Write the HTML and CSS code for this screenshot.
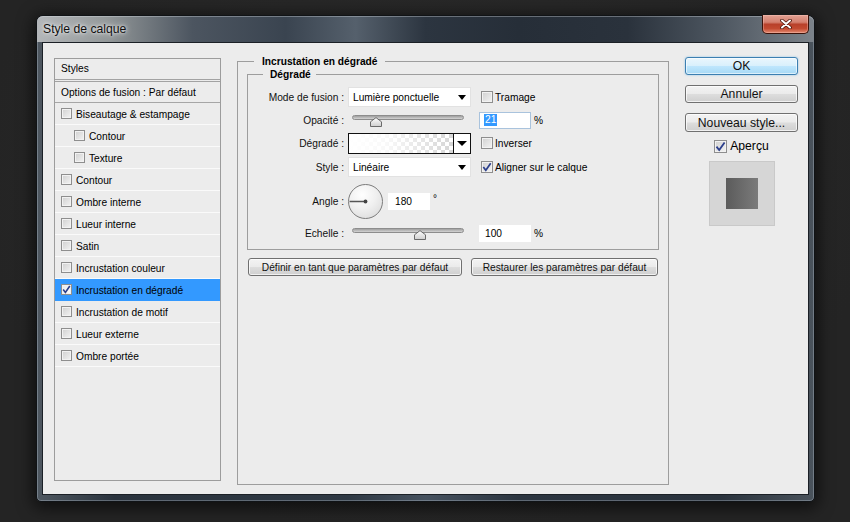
FILE: index.html
```html
<!DOCTYPE html>
<html lang="fr">
<head>
<meta charset="utf-8">
<title>Style de calque</title>
<link rel="stylesheet" href="styles.css">
</head>
<body>
<div class="desktop">
  <div class="window">
    <div class="titlebar">
      <span class="title">Style de calque</span>
      <div class="close">
        <svg width="12" height="10" viewBox="0 0 12 10"><path d="M2 1.5 L10 8.5 M10 1.5 L2 8.5" stroke="#4a1408" stroke-width="3.6" stroke-linecap="round"/><path d="M2 1.5 L10 8.5 M10 1.5 L2 8.5" stroke="#ffffff" stroke-width="2" stroke-linecap="round"/></svg>
      </div>
    </div>
    <div class="client">
      <div class="styles-panel">
        <div class="sp-head">Styles</div>
        <div class="sp-opts">Options de fusion : Par défaut</div>
        <div class="sp-row"><span class="cb"></span>Biseautage &amp; estampage</div>
        <div class="sp-row sub"><span class="cb"></span>Contour</div>
        <div class="sp-row sub"><span class="cb"></span>Texture</div>
        <div class="sp-row"><span class="cb"></span>Contour</div>
        <div class="sp-row"><span class="cb"></span>Ombre interne</div>
        <div class="sp-row"><span class="cb"></span>Lueur interne</div>
        <div class="sp-row"><span class="cb"></span>Satin</div>
        <div class="sp-row"><span class="cb"></span>Incrustation couleur</div>
        <div class="sp-row selected"><span class="cb checked"><svg width="9" height="9" viewBox="0 0 9 9"><path d="M1.2 4.6 L3.4 7.4 L7.8 1" fill="none" stroke="#2c3f8c" stroke-width="1.6"/></svg></span>Incrustation en dégradé</div>
        <div class="sp-row"><span class="cb"></span>Incrustation de motif</div>
        <div class="sp-row"><span class="cb"></span>Lueur externe</div>
        <div class="sp-row"><span class="cb"></span>Ombre portée</div>
      </div>

      <fieldset class="group">
        <legend>Incrustation en dégradé</legend>
        <fieldset class="subgroup">
          <legend>Dégradé</legend>
          <div class="form-grid">
            <div class="lbl">Mode de fusion :</div>
            <div class="select"><span>Lumière ponctuelle</span><svg class="arrow" width="8" height="5" viewBox="0 0 8 5"><path d="M0 0 H8 L4 5 Z" fill="#000"/></svg></div>
            <div class="c3"><span class="chk"><span class="cb"></span>Tramage</span></div>

            <div class="lbl">Opacité :</div>
            <div class="slider"><div class="track"></div><svg class="thumb" style="left:calc(21% - 6px)" width="12" height="10" viewBox="0 0 12 10"><defs><linearGradient id="tg1" x1="0" y1="0" x2="0" y2="1"><stop offset="0" stop-color="#ffffff"/><stop offset="1" stop-color="#cfcfcf"/></linearGradient></defs><path d="M0.5 9.5 V4.8 L6 0.6 L11.5 4.8 V9.5 Z" fill="url(#tg1)" stroke="#6a6a6a"/></svg></div>
            <div class="c3"><div class="field focus"><span class="sel">21</span></div><span class="unit">%</span></div>

            <div class="lbl">Dégradé :</div>
            <div class="gradbox"><div class="gradfill"></div><div class="gradarrow"><svg width="10" height="5" viewBox="0 0 10 5"><path d="M0 0 H10 L5 5 Z" fill="#000"/></svg></div></div>
            <div class="c3"><span class="chk"><span class="cb"></span>Inverser</span></div>

            <div class="lbl">Style :</div>
            <div class="select"><span>Linéaire</span><svg class="arrow" width="8" height="5" viewBox="0 0 8 5"><path d="M0 0 H8 L4 5 Z" fill="#000"/></svg></div>
            <div class="c3"><span class="chk"><span class="cb checked"><svg width="10" height="10" viewBox="0 0 10 10"><path d="M1.3 5 L3.8 8.2 L8.7 1.2" fill="none" stroke="#2c3f8c" stroke-width="1.7"/></svg></span>Aligner sur le calque</span></div>

            <div class="lbl">Angle :</div>
            <div class="angle-ctl">
              <div class="dial"><svg width="35" height="35" viewBox="0 0 35 35"><path d="M1.5 17.5 H17.5" stroke="#555" stroke-width="1.4"/><circle cx="17.5" cy="17.5" r="1.9" fill="#444"/></svg></div>
              <div class="field angle-field">180</div>
              <span class="deg">°</span>
            </div>
            <div class="c3"></div>

            <div class="lbl">Echelle :</div>
            <div class="slider"><div class="track"></div><svg class="thumb" style="left:calc(61% - 6px)" width="12" height="10" viewBox="0 0 12 10"><defs><linearGradient id="tg2" x1="0" y1="0" x2="0" y2="1"><stop offset="0" stop-color="#ffffff"/><stop offset="1" stop-color="#cfcfcf"/></linearGradient></defs><path d="M0.5 9.5 V4.8 L6 0.6 L11.5 4.8 V9.5 Z" fill="url(#tg2)" stroke="#6a6a6a"/></svg></div>
            <div class="c3"><div class="field">100</div><span class="unit">%</span></div>
          </div>
        </fieldset>
        <div class="btn-row">
          <div class="btn btn-def">Définir en tant que paramètres par défaut</div>
          <div class="btn btn-rest">Restaurer les paramètres par défaut</div>
        </div>
      </fieldset>

      <div class="side">
        <div class="btn big ok">OK</div>
        <div class="btn big">Annuler</div>
        <div class="btn big new">Nouveau style...</div>
        <div class="preview-chk"><span class="cb big-cb checked"><svg width="11" height="11" viewBox="0 0 11 11"><path d="M1.5 5.6 L4.2 9 L9.6 1.4" fill="none" stroke="#2c3f8c" stroke-width="1.8"/></svg></span>Aperçu</div>
        <div class="preview"><div class="swatch"></div></div>
      </div>
    </div>
  </div>
</div>
</body>
</html>
```

FILE: styles.css
```css
* { box-sizing: border-box; }
html, body { margin: 0; height: 100%; }
body {
  background: #262626;
  font-family: "Liberation Sans", Arial, sans-serif;
  font-size: 10.2px;
  color: #000;
}
.desktop {
  height: 522px;
  padding: 15px 0 0 36px;
  background: radial-gradient(ellipse at 50% 35%, #2b2b2b 0%, #242424 75%);
}
.window {
  width: 779px;
  height: 487px;
  display: flex;
  flex-direction: column;
  padding: 0 5px 6px;
  border: 1px solid #101316;
  border-radius: 7px 7px 5px 5px;
  background: linear-gradient(90deg, #4f5861 0%, #2a333d 10%, #2f3944 40%, #46525f 50%, #2c3540 62%, #2a333d 88%, #4a535c 100%);
  box-shadow: 0 3px 16px 3px rgba(0,0,0,.6), inset 0 0 0 1px rgba(190,200,212,.35);
}
.titlebar {
  height: 26px;
  margin: 0 -5px;
  padding: 0 5px;
  display: flex;
  align-items: flex-start;
  border-radius: 6px 6px 0 0;
  background: linear-gradient(90deg, #b3b6b9 0%, #939899 9%, #4c5560 20%, #3a4450 32%, #55606c 41%, #2c3540 50%, #262e38 62%, #2a323c 76%, #4e5761 88%, #7c838a 100%);
  box-shadow: inset 0 1px 0 rgba(220,225,232,.35);
}
.title {
  margin-left: 1px;
  line-height: 26px;
  font-size: 12.2px;
  color: #101010;
  text-shadow: 0 0 6px rgba(255,255,255,.9), 0 0 3px rgba(255,255,255,.8);
}
.close {
  margin-left: auto;
  margin-top: -1px;
  width: 47px;
  height: 19px;
  display: flex;
  align-items: center;
  justify-content: center;
  border: 1px solid #3b1209;
  border-top: none;
  border-radius: 0 0 5px 5px;
  background: linear-gradient(#e2a193 0%, #d4806f 40%, #b8402a 52%, #c24a31 75%, #e38a70 100%);
  box-shadow: inset 0 0 0 1px rgba(255,210,200,.35);
}
.client {
  flex: 1;
  display: flex;
  align-items: flex-start;
  padding: 12px 0 0 11px;
  background: #ececec;
  border: 1px solid #1b2026;
}

/* left styles list */
.styles-panel {
  width: 167px;
  height: 423px;
  margin-top: 3px;
  border: 1px solid #9c9c9c;
  background: #ececec;
}
.sp-head {
  height: 23px;
  padding: 0 6px;
  line-height: 20px;
  border-bottom: 3px double #a2a2a2;
}
.sp-opts {
  height: 21px;
  padding: 1px 6px 0;
  line-height: 20px;
  border-bottom: 1px solid #a6a6a6;
}
.sp-row {
  height: 22px;
  display: flex;
  align-items: center;
  padding: 1px 0 0 6px;
  border-bottom: 1px solid #fafafa;
}
.sp-row.sub { padding-left: 19px; }
.sp-row.selected { background: #3399ff; border-bottom-color: #3399ff; }
.cb {
  flex: none;
  width: 11px;
  height: 11px;
  margin-right: 4px;
  display: flex;
  align-items: center;
  justify-content: center;
  border: 1px solid #8e8e8e;
  background: linear-gradient(135deg, #d0d0d0 0%, #f3f3f3 100%);
  box-shadow: inset 0 0 0 1px #f2f2f2;
}
.sp-row .cb { margin-top: -1px; }
.sp-row.selected .cb { background: linear-gradient(135deg, #e8e8e8, #ffffff); }

/* center group */
.group {
  width: 432px;
  height: 430px;
  margin: 0 0 0 16px;
  padding: 0 9px;
  min-width: 0;
  border: 1px solid #9d9d9d;
}
.group > legend {
  margin-left: 7px;
  padding: 0 8px;
  line-height: 13px;
  font-weight: bold;
}
.subgroup {
  margin: 0;
  padding: 0 0 5px;
  min-width: 0;
  border: 1px solid #9d9d9d;
}
.subgroup > legend {
  margin-left: 15px;
  padding: 0 5px 0 7px;
  line-height: 13px;
  font-weight: bold;
}
.form-grid {
  display: grid;
  grid-template-columns: 96px 123px 1fr;
  grid-template-rows: 22px 24px 22px 26px 42px 22px;
  column-gap: 4px;
  align-items: center;
  padding-top: 5px;
}
.lbl { text-align: right; color: #111; }
.c3 { padding-left: 4px; display: flex; align-items: center; }
.chk { display: flex; align-items: center; margin-left: 2px; }
.chk .cb { width: 12px; height: 12px; margin-right: 2px; }
.select {
  height: 20px;
  display: flex;
  align-items: center;
  justify-content: space-between;
  padding: 0 4px 0 4px;
  background: #fff;
  border: 1px solid #e2e2e2;
}
.slider {
  position: relative;
  height: 13px;
  margin: 0 7px 0 4px;
}
.track {
  height: 5px;
  margin-top: 1px;
  border: 1px solid #8d8d8d;
  border-radius: 3px;
  background: linear-gradient(#9f9f9f, #d4d4d4);
}
.thumb { position: absolute; top: 3px; }
.field {
  width: 52px;
  height: 17px;
  display: flex;
  align-items: center;
  padding-left: 5px;
  background: #fff;
  border: 1px solid #fff;
}
.field.focus { border-color: #a9c3dd; padding-left: 4px; }
.sel { background: #3399ff; color: #fff; padding: 0 1px; line-height: 12px; }
.unit { margin-left: 3px; }
.gradbox {
  height: 21px;
  display: flex;
  border: 1px solid #111;
  background: #fff;
}
.gradfill {
  flex: 1;
  background:
    linear-gradient(90deg, #ffffff 0%, rgba(255,255,255,.85) 35%, rgba(255,255,255,0) 100%),
    repeating-conic-gradient(#d6d6d6 0 25%, #ffffff 0 50%) 0 0 / 8px 8px;
}
.gradarrow {
  width: 17px;
  display: flex;
  align-items: center;
  justify-content: center;
  border-left: 1px solid #111;
  background: #fff;
}
.angle-ctl { display: flex; align-items: center; }
.dial {
  width: 35px;
  height: 35px;
  border: 1px solid #7c7c7c;
  border-radius: 50%;
  background: radial-gradient(circle at 40% 30%, #ffffff 0%, #f0f0f0 45%, #d6d6d6 100%);
  display: flex;
  align-items: center;
  justify-content: center;
  overflow: hidden;
}
.dial svg { margin: -1px; }
.angle-field { width: 42px; margin-left: 5px; padding-left: 6px; }
.deg { margin-left: 3px; align-self: flex-start; margin-top: 9px; font-size: 10px; }

.btn-row { display: flex; margin-top: 8px; }
.btn {
  height: 18px;
  display: flex;
  align-items: center;
  justify-content: center;
  border: 1px solid #707070;
  border-radius: 3px;
  background: linear-gradient(#f3f3f3 0%, #ebebeb 48%, #dddddd 52%, #cfcfcf 100%);
  box-shadow: inset 0 0 0 1px rgba(255,255,255,.7);
  color: #111;
}
.btn-def { width: 214px; margin-left: 1px; }
.btn-rest { width: 187px; margin-left: 9px; }

/* right column */
.side {
  width: 113px;
  margin-left: 16px;
  margin-top: 2px;
  display: flex;
  flex-direction: column;
  align-items: center;
  font-size: 12.2px;
}
.btn.big { width: 113px; height: 18px; margin-bottom: 10px; }
.btn.big.new { height: 19px; margin-bottom: 7px; }
.btn.ok {
  border-color: #3c7fb1;
  background: linear-gradient(#eaf6fd 0%, #d9f0fc 48%, #bee6fd 52%, #a7d9f5 100%);
  box-shadow: inset 0 0 0 1px rgba(255,255,255,.6), 0 0 2px rgba(60,160,230,.6);
}
.preview-chk { display: flex; align-items: center; height: 14px; }
.cb.big-cb { width: 13px; height: 13px; margin-right: 3px; }
.preview {
  width: 66px;
  height: 65px;
  margin-top: 8px;
  display: flex;
  align-items: center;
  justify-content: center;
  background: #d6d6d6;
  border: 1px solid #c9c9c9;
}
.swatch {
  width: 32px;
  height: 31px;
  background: linear-gradient(90deg, #5b5b5b, #7b7b7b);
}
```
